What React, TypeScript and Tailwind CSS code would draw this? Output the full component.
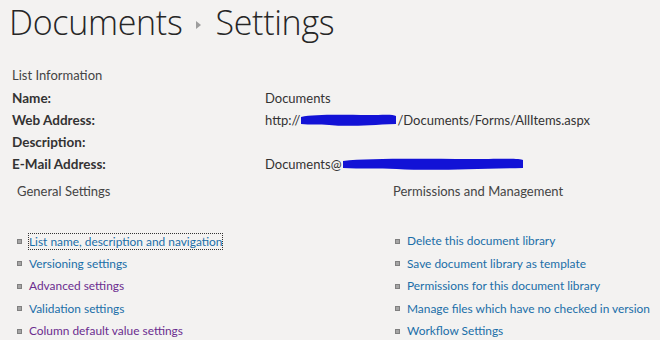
import React from 'react'

const info = [
  { label: 'Name:', value: 'Documents' },
  { label: 'Web Address:', value: 'web' },
  { label: 'Description:', value: '' },
  { label: 'E-Mail Address:', value: 'mail' },
]

const general = [
  { text: 'List name, description and navigation', visited: false, focus: true },
  { text: 'Versioning settings', visited: false },
  { text: 'Advanced settings', visited: true },
  { text: 'Validation settings', visited: false },
  { text: 'Column default value settings', visited: true },
]

const permissions = [
  { text: 'Delete this document library', visited: false },
  { text: 'Save document library as template', visited: false },
  { text: 'Permissions for this document library', visited: false },
  { text: 'Manage files which have no checked in version', visited: false },
  { text: 'Workflow Settings', visited: false },
]

function Scribble({ width }: { width: number }) {
  const w = width
  return (
    <svg width={w} height="14" viewBox={`0 0 ${w} 14`} className="inline-block">
      <path
        d={`M1 4 C ${w * 0.15} 1, ${w * 0.45} 2, ${w * 0.7} 2 C ${w * 0.85} 2, ${w - 4} 1, ${w - 1} 3 L ${w - 1} 11 C ${w * 0.7} 12, ${w * 0.5} 14, ${w * 0.3} 12 C ${w * 0.2} 11, ${w * 0.1} 12, 1 11 Z`}
        fill="#1212d6"
      />
    </svg>
  )
}

function LinkList({ items }: { items: { text: string; visited: boolean; focus?: boolean }[] }) {
  return (
    <ul className="flex flex-col">
      {items.map((item) => (
        <li key={item.text} className="flex items-center h-[22.5px] whitespace-nowrap">
          <span className="w-[5px] h-[5px] bg-[#a5a5a5] border border-[#808080] mr-[7px]" />
          <a
            className={`text-[11.9px] ${item.visited ? 'text-[#6b2d8f]' : 'text-[#1a6ea8]'} ${
              item.focus ? 'outline outline-1 outline-dotted outline-[#333] leading-[15px]' : ''
            }`}
          >
            {item.text}
          </a>
        </li>
      ))}
    </ul>
  )
}

export default function App() {
  return (
    <div className="w-[660px] h-[340px] overflow-hidden bg-[#f3f2f1] text-[#333] font-['Lato',sans-serif]">
      <div className="flex items-center pl-[9px] font-['Open_Sans',sans-serif]">
        <span className="text-[34px] leading-[44px] font-light text-[#262626] tracking-[-0.3px]">Documents</span>
        <svg width="5" height="8" viewBox="0 0 5 8" className="mx-[14px] mt-[6px]">
          <path d="M0 0 L5 4 L0 8 Z" fill="#9d9d9d" />
        </svg>
        <span className="text-[34px] leading-[44px] font-light text-[#262626] tracking-[-0.3px]">Settings</span>
      </div>

      <div className="pl-[12px] mt-[20px]">
        <div className="text-[13px] text-[#444] h-[22px] leading-[22px]">List Information</div>
        <div className="grid grid-cols-[253px_1fr] mt-[1px]">
          {info.map((row) => (
            <React.Fragment key={row.label}>
              <div className="text-[13.5px] font-bold text-[#333] h-[22px] leading-[22px]">{row.label}</div>
              <div className="text-[13px] text-[#333] h-[22px] leading-[22px] whitespace-nowrap">
                {row.value === 'web' ? (
                  <span className="flex items-center">
                    http://<Scribble width={97} />/Documents/Forms/AllItems.aspx
                  </span>
                ) : row.value === 'mail' ? (
                  <span className="flex items-center">
                    Documents@<Scribble width={182} />
                  </span>
                ) : (
                  row.value
                )}
              </div>
            </React.Fragment>
          ))}
        </div>
      </div>

      <div className="grid grid-cols-[376px_1fr] pl-[17px] mt-[5px]">
        <div>
          <div className="text-[13px] text-[#444] h-[22px] leading-[22px]">General Settings</div>
          <div className="mt-[28px]">
            <LinkList items={general} />
          </div>
        </div>
        <div>
          <div className="text-[13px] text-[#444] h-[22px] leading-[22px]">Permissions and Management</div>
          <div className="mt-[28px] pl-[2px]">
            <LinkList items={permissions} />
          </div>
        </div>
      </div>
    </div>
  )
}
